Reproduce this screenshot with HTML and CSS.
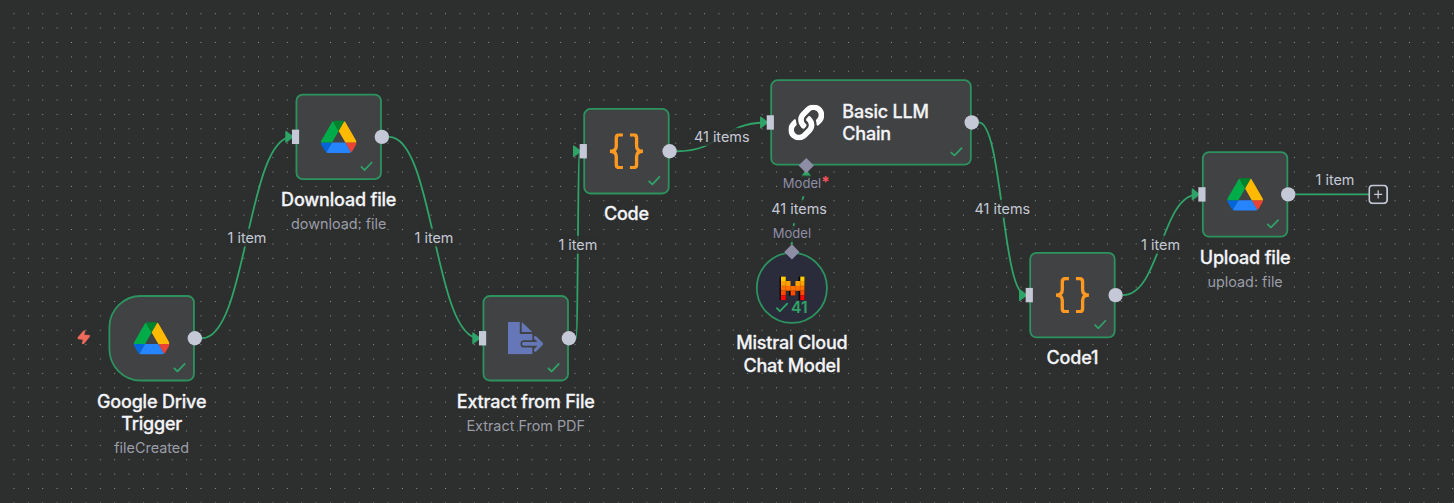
FILE: index.html
```html
<!DOCTYPE html>
<html lang="en">
<head>
<meta charset="utf-8">
<title>Workflow</title>
<link rel="stylesheet" href="styles.css">
</head>
<body>
<svg class="symbols" aria-hidden="true">
  <symbol id="drive" viewBox="0 0 87.3 78">
    <path d="m6.6 66.85 3.85 6.65c.8 1.4 1.95 2.5 3.3 3.3l13.75-23.8h-27.5c0 1.55.4 3.1 1.2 4.5z" fill="#0066da"/>
    <path d="m43.65 25-13.75-23.8c-1.35.8-2.5 1.9-3.3 3.3l-25.4 44a9.06 9.06 0 0 0 -1.2 4.5h27.5z" fill="#00ac47"/>
    <path d="m73.55 76.8c1.35-.8 2.5-1.9 3.3-3.3l1.6-2.75 7.65-13.25c.8-1.4 1.2-2.95 1.2-4.5h-27.502l5.852 11.5z" fill="#ea4335"/>
    <path d="m43.65 25 13.75-23.8c-1.35-.8-2.9-1.2-4.5-1.2h-18.5c-1.6 0-3.15.45-4.5 1.2z" fill="#00832d"/>
    <path d="m59.8 53h-32.3l-13.75 23.8c1.35.8 2.9 1.2 4.5 1.2h50.8c1.6 0 3.15-.45 4.5-1.2z" fill="#2684fc"/>
    <path d="m73.4 26.5-12.7-22c-.8-1.4-1.95-2.5-3.3-3.3l-13.75 23.8 16.15 28h27.45c0-1.55-.4-3.1-1.2-4.5z" fill="#ffba00"/>
  </symbol>
  <symbol id="braces" viewBox="0 0 105 108">
    <path d="M42 4.500H31Q22 4.500 22 14V38Q22 54 3 54Q22 54 22 70V94Q22 103.500 31 103.500H42M63 4.500H74Q83 4.500 83 14V38Q83 54 102 54Q83 54 83 70V94Q83 103.500 74 103.500H63" fill="none" stroke="#ff9922" stroke-width="10"/>
  </symbol>
  <symbol id="export" viewBox="0 0 108 98">
    <path d="M0 0H36V36H74V55H49a11 11 0 0 0 0 22H74V98H0z" fill="#6577b8"/>
    <path d="M42 0L74 30H42z" fill="#6577b8"/>
    <path d="M48 66H98" fill="none" stroke="#6577b8" stroke-width="11" stroke-linecap="round"/>
    <path d="M83 47L102 66L83 85" fill="none" stroke="#6577b8" stroke-width="9" stroke-linecap="round" stroke-linejoin="round"/>
  </symbol>
  <symbol id="link" viewBox="0 0 512 512">
    <path fill="#fff" d="M326.612 185.391c59.747 59.809 58.927 155.698.36 214.59-.11.12-.24.25-.36.37l-67.2 67.2c-59.27 59.27-155.699 59.262-214.96 0-59.27-59.26-59.27-155.7 0-214.96l37.106-37.106c9.84-9.84 26.786-3.3 27.294 10.606.648 17.722 3.826 35.527 9.69 52.721 1.986 5.822.567 12.262-3.783 16.612l-13.087 13.087c-28.026 28.026-28.905 73.66-1.155 101.96 28.024 28.579 74.086 28.749 102.325.51l67.2-67.19c28.191-28.191 28.073-73.757 0-101.83-3.701-3.694-7.429-6.564-10.341-8.569a16.037 16.037 0 0 1-6.947-12.606c-.396-10.567 3.348-21.456 11.698-29.806l21.054-21.055c5.521-5.521 14.182-6.199 20.584-1.731a152.482 152.482 0 0 1 20.522 17.197zM467.547 44.449c-59.261-59.262-155.69-59.27-214.96 0l-67.2 67.2c-.12.12-.25.25-.36.37-58.566 58.892-59.387 154.781.36 214.59a152.454 152.454 0 0 0 20.521 17.196c6.402 4.468 15.064 3.789 20.584-1.731l21.054-21.055c8.35-8.35 12.094-19.239 11.698-29.806a16.037 16.037 0 0 0-6.947-12.606c-2.912-2.005-6.64-4.875-10.341-8.569-28.073-28.073-28.191-73.639 0-101.83l67.2-67.19c28.239-28.239 74.3-28.069 102.325.51 27.75 28.3 26.872 73.934-1.155 101.96l-13.087 13.087c-4.35 4.35-5.769 10.79-3.783 16.612 5.864 17.194 9.042 34.999 9.69 52.721.509 13.906 17.454 20.446 27.294 10.606l37.106-37.106c59.271-59.259 59.271-155.699.001-214.959z"/>
  </symbol>
  <symbol id="mistral" viewBox="-1.700 0 26.700 25">
    <path d="M-1.700 0H5V25H-1.700zM18.300 0H25V25H18.300zM8.300 10H15V20H8.300zM4 5H10V15H4z" fill="#000"/>
    <path d="M0 0H5V5H0zM20 0H25V5H20z" fill="#ffcd00"/>
    <path d="M0 5H10V10H0zM15 5H25V10H15z" fill="#ffa200"/>
    <path d="M0 10H25V15H0z" fill="#ff7000"/>
    <path d="M0 15H5V20H0zM10 15H15V20H10zM20 15H25V20H20z" fill="#ff4b00"/>
    <path d="M0 20H5V25H0zM20 20H25V25H20z" fill="#ff0508"/>
    <path d="M5 5V15M10 10V15M15 10V15M20 5V15M0 10H5M20 10H25" stroke="#a34a00" stroke-width=".4"/>
  </symbol>
  <symbol id="check" viewBox="0 0 14 11">
    <path d="M.7 5.900L4.700 9.900L13.300 1" fill="none" stroke="#2fa468" stroke-width="1.900"/>
  </symbol>
  <symbol id="bolt" viewBox="0 0 38 42">
    <path d="M23 1L20 14L36 15Q38 16 36 19L18 41L14 40L17 27L3 26Q0 25 2 21L20 0z" fill="#ee6b5b" stroke="#ee6b5b" stroke-width="1.500" stroke-linejoin="round"/>
  </symbol>
</svg>

<main class="canvas">
  <svg class="dots" aria-hidden="true">
    <defs>
      <pattern id="grid" x="64.307" y="35.307" width="14.387" height="14.387" patternUnits="userSpaceOnUse">
        <circle cx="7.193" cy="7.193" r=".5" fill="#b4b6b5"/>
      </pattern>
    </defs>
    <rect width="100%" height="100%" fill="url(#grid)"/>
  </svg>

  <div class="viewport">
    <svg class="edges" width="1" height="1">
      <defs>
        <marker id="arrow" viewBox="-12 -8 16 16" refX="-4" refY="0" markerWidth="16" markerHeight="16" markerUnits="userSpaceOnUse" orient="auto">
          <path d="M-10.700 -5.900L-3 0L-10.700 5.900z" fill="#2fa468" stroke="#2fa468" stroke-width="1.400" stroke-linejoin="round"/>
        </marker>
      </defs>
      <g class="edge" marker-end="url(#arrow)">
        <path marker-end="url(#arrow)" d="M104 48C154 48 154 -176 204 -176"/>
        <path marker-end="url(#arrow)" d="M312 -176C362 -176 362 48 412 48"/>
        <path marker-end="url(#arrow)" d="M520 48C522 48 522 -160 524 -160"/>
        <path marker-end="url(#arrow)" d="M632 -160C682 -160 682 -192 732 -192"/>
        <path marker-end="url(#arrow)" d="M968 -192C994 -192 994 0 1020 0"/>
        <path marker-end="url(#arrow)" d="M1128 0C1170 0 1170 -112 1212 -112"/>
      </g>
      <path class="edge edge-dashed" d="M760 -56C760 -96 776 -96 776 -136"/>
      <path class="edge" d="M1320 -112H1402"/>
      <path class="tip" d="M770.300 -131.500L776 -139L781.700 -131.500z"/>
    </svg>

    <span class="edge-label" style="left:154px;top:-64px">1 item</span>
    <span class="edge-label" style="left:362px;top:-64px">1 item</span>
    <span class="edge-label" style="left:522px;top:-56px">1 item</span>
    <span class="edge-label" style="left:682px;top:-176px">41 items</span>
    <span class="edge-label" style="left:768px;top:-96px">41 items</span>
    <span class="edge-label" style="left:994px;top:-96px">41 items</span>
    <span class="edge-label" style="left:1170px;top:-56px">1 item</span>
    <span class="edge-label" style="left:1364px;top:-128px">1 item</span>

    <section class="node" style="left:0;top:0">
      <svg class="bolt"><use href="#bolt"/></svg>
      <div class="box trigger"><svg class="icon"><use href="#drive"/></svg></div>
      <svg class="check"><use href="#check"/></svg>
      <i class="output"></i>
      <h2>Google Drive Trigger</h2><p>fileCreated</p>
    </section>

    <section class="node" style="left:208px;top:-224px">
      <div class="box"><svg class="icon"><use href="#drive"/></svg></div>
      <svg class="check"><use href="#check"/></svg>
      <i class="input"></i><i class="output"></i>
      <h2>Download file</h2><p>download: file</p>
    </section>

    <section class="node" style="left:416px;top:0">
      <div class="box"><svg class="icon export"><use href="#export"/></svg></div>
      <svg class="check"><use href="#check"/></svg>
      <i class="input"></i><i class="output"></i>
      <h2>Extract from File</h2><p>Extract From PDF</p>
    </section>

    <section class="node" style="left:528px;top:-208px">
      <div class="box"><svg class="icon"><use href="#braces"/></svg></div>
      <svg class="check"><use href="#check"/></svg>
      <i class="input"></i><i class="output"></i>
      <h2>Code</h2>
    </section>

    <section class="node wide" style="left:736px;top:-240px">
      <div class="box"><svg class="icon"><use href="#link"/></svg><h2>Basic LLM Chain</h2></div>
      <svg class="check"><use href="#check"/></svg>
      <i class="input"></i><i class="output"></i><i class="diamond"></i>
      <span class="port">Model<b>*</b></span>
    </section>

    <section class="node round" style="left:720px;top:-48px">
      <div class="box"><svg class="icon"><use href="#mistral"/></svg></div>
      <div class="runs"><svg><use href="#check"/></svg>41</div>
      <i class="diamond"></i>
      <span class="port">Model</span>
      <h2>Mistral Cloud Chat Model</h2>
    </section>

    <section class="node" style="left:1024px;top:-48px">
      <div class="box"><svg class="icon"><use href="#braces"/></svg></div>
      <svg class="check"><use href="#check"/></svg>
      <i class="input"></i><i class="output"></i>
      <h2>Code1</h2>
    </section>

    <section class="node" style="left:1216px;top:-160px">
      <div class="box"><svg class="icon"><use href="#drive"/></svg></div>
      <svg class="check"><use href="#check"/></svg>
      <i class="input"></i><i class="output"></i>
      <h2>Upload file</h2><p>upload: file</p>
    </section>

    <svg class="plus" viewBox="0 0 22 22">
      <rect x="1" y="1" width="20" height="20" rx="4"/>
      <path d="M11 6.500V15.500M6.500 11H15.500"/>
    </svg>
  </div>
</main>
</body>
</html>
```
FILE: styles.css
```css
* { box-sizing: border-box; }

body {
  margin: 0;
  background: #2d2e2e;
  font-family: Inter, "Open Sans", sans-serif;
}

.symbols { position: absolute; width: 0; height: 0; }

.canvas {
  position: relative;
  width: 1454px;
  height: 503px;
  overflow: hidden;
  background: #2d2e2e;
}

.dots { display: block; width: 100%; height: 100%; }

.viewport {
  position: absolute;
  left: 0;
  top: 0;
  transform: translate(108.500px, 295.100px) scale(.8992);
  transform-origin: 0 0;
}

.edges { position: absolute; left: 0; top: 0; overflow: visible; }
.edge { fill: none; stroke: #2fa468; stroke-width: 2; }
.edge-dashed { stroke-dasharray: 8 8; }
.tip { fill: #2fa468; stroke: #2fa468; stroke-linejoin: round; }

.edge-label {
  position: absolute;
  transform: translate(-50%, -50%);
  background: rgba(45, 46, 46, .85);
  color: #c5c8d4;
  font-size: 16px;
  line-height: 20px;
  white-space: nowrap;
}

.node { position: absolute; width: 96px; }

.box {
  display: flex;
  align-items: center;
  justify-content: center;
  width: 96px;
  height: 96px;
  border: 2px solid #2c935f;
  border-radius: 8px;
  background: #414244;
}
.trigger { border-radius: 36px 8px 8px 36px; }

.icon { width: 40px; height: 40px; }
.icon.export { height: 36px; }

.check { position: absolute; right: 10px; top: 75px; width: 14px; height: 11px; }

.input, .output, .diamond { position: absolute; background: #c5c8d6; }
.input { left: -4px; top: 40px; width: 8px; height: 16px; }
.output { right: -8px; top: 40px; width: 16px; height: 16px; border-radius: 50%; }
.diamond { width: 12px; height: 12px; background: #8e8da6; transform: rotate(45deg); }

.bolt { position: absolute; left: -35px; top: 39px; width: 15px; height: 16px; }

h2 {
  width: 160px;
  margin: 10px -32px 0;
  color: #f3f4f8;
  font-size: 20px;
  font-weight: 500;
  letter-spacing: -.2px;
  line-height: 25px;
  text-align: center;
  -webkit-text-stroke: .3px #f3f4f8;
}

p {
  margin: 4px -32px 0;
  color: #9a9da6;
  font-size: 16px;
  line-height: 20px;
  text-align: center;
}

.wide, .wide .box { width: 224px; }
.wide .box { justify-content: flex-start; gap: 20px; padding-left: 18px; }
.wide h2 { margin: 2px 0 0; width: 110px; text-align: left; }
.wide .diamond { left: 34px; top: 90px; }

.port {
  position: absolute;
  transform: translate(-50%, -50%);
  background: rgba(45, 46, 46, .85);
  color: #8e8da6;
  font-size: 14.500px;
  line-height: 18px;
}
.wide .port { left: 40px; top: 116px; }
.port b { color: #f8525c; font-size: 17px; line-height: 1; }

.round, .round .box { width: 80px; }
.round .box { height: 80px; border-radius: 50%; background: #2b2c3b; }
.round .icon { width: 28.700px; height: 27px; }
.round .diamond { left: 34px; top: -6px; }
.round .port { left: 40px; top: -20.500px; }
.round h2 { margin: 9px -40px 0; }

.runs {
  position: absolute;
  left: 22px;
  top: 51.500px;
  display: flex;
  align-items: center;
  gap: 3px;
  color: #2fa468;
  font-size: 17.500px;
  font-weight: 600;
  line-height: 20px;
}
.runs svg { width: 14px; height: 11px; }

.plus { position: absolute; left: 1401px; top: -123px; width: 22px; height: 22px; }
.plus rect { fill: #2d2e2e; stroke: #c5c8d6; stroke-width: 2; }
.plus path { stroke: #c5c8d6; stroke-width: 1.400; }
```
